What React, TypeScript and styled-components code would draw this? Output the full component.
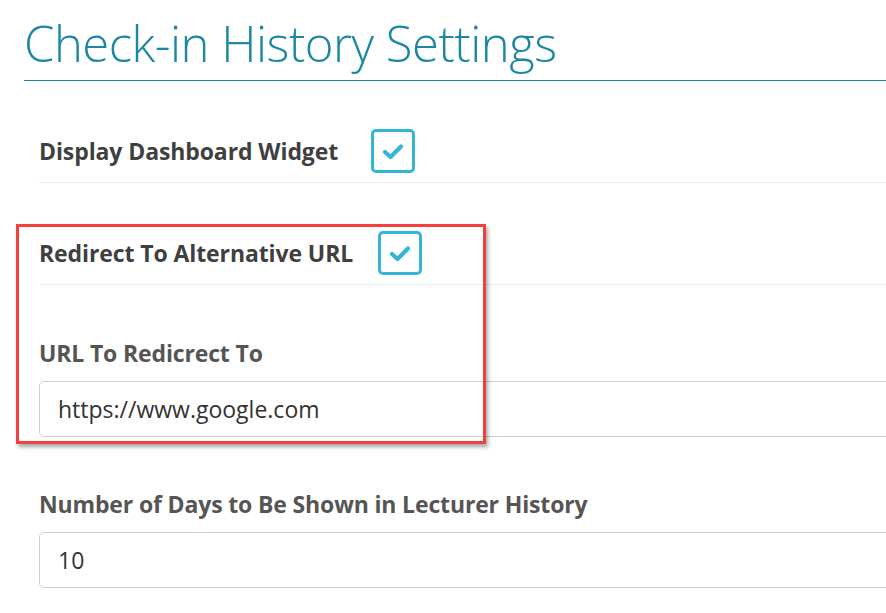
import React from "react";
import styled, { createGlobalStyle } from "styled-components";

const Global = createGlobalStyle`
  html, body { margin: 0; padding: 0; background: #fff; overflow: hidden; }
  body { font-family: "Open Sans", "Noto Sans", sans-serif; }
`;

const Page = styled.div`
  width: 1100px;
  padding-left: 24px;
  box-sizing: border-box;
`;

const Title = styled.h1`
  margin: 0;
  padding-top: 17px;
  height: 81px;
  box-sizing: border-box;
  font-weight: 300;
  font-size: 49px;
  line-height: 52px;
  letter-spacing: -0.5px;
  color: #1b87a3;
  border-bottom: 1px solid #1a86a0;
`;

const Form = styled.div`
  padding-left: 15px;
`;

const Row = styled.div`
  display: flex;
  align-items: center;
  padding: 48px 0 9px;
  border-bottom: 1px solid #eaeaea;
`;

const RowLabel = styled.span<{ $w: number }>`
  width: ${(p) => p.$w}px;
  font-weight: 700;
  font-size: 23px;
  letter-spacing: -0.1px;
  color: #3f3f3f;
`;

const CheckBox = styled.span`
  width: 44px;
  height: 44px;
  box-sizing: border-box;
  border: 3px solid #35b4d9;
  border-radius: 5px;
  display: flex;
  align-items: center;
  justify-content: center;
`;

const Highlight = styled.div`
  position: relative;
`;

const Annotation = styled.div`
  position: absolute;
  top: 41px;
  left: -23px;
  width: 470px;
  height: 220px;
  box-sizing: border-box;
  border: 3px solid #f2403f;
  box-shadow: 2px 3px 4px rgba(0, 0, 0, 0.35);
  pointer-events: none;
`;

const Field = styled.div<{ $top: number }>`
  display: flex;
  flex-direction: column;
  padding-top: ${(p) => p.$top}px;
`;

const FieldLabel = styled.label`
  font-weight: 700;
  font-size: 23px;
  line-height: 28px;
  letter-spacing: -0.15px;
  color: #555;
  margin-bottom: 14px;
`;

const Input = styled.div`
  height: 56px;
  box-sizing: border-box;
  border: 1px solid #cfcfd4;
  border-radius: 5px;
  padding: 0 18px;
  display: flex;
  align-items: center;
  font-size: 23px;
  color: #333;
`;

const Check = () => (
  <svg width="22" height="17" viewBox="0 0 22 17">
    <polyline
      points="3,9 8.5,14 19,3.5"
      fill="none"
      stroke="#35b4d9"
      strokeWidth="4.2"
      strokeLinecap="round"
      strokeLinejoin="round"
    />
  </svg>
);

export default function App() {
  return (
    <Page>
      <Global />
      <Title>Check-in History Settings</Title>
      <Form>
        <Row>
          <RowLabel $w={332}>Display Dashboard Widget</RowLabel>
          <CheckBox>
            <Check />
          </CheckBox>
        </Row>
        <Highlight>
          <Annotation />
          <Row>
            <RowLabel $w={339}>Redirect To Alternative URL</RowLabel>
            <CheckBox>
              <Check />
            </CheckBox>
          </Row>
          <Field $top={54}>
            <FieldLabel>URL To Redicrect To</FieldLabel>
            <Input>https://www.google.com</Input>
          </Field>
        </Highlight>
        <Field $top={53}>
          <FieldLabel>Number of Days to Be Shown in Lecturer History</FieldLabel>
          <Input>10</Input>
        </Field>
      </Form>
    </Page>
  );
}
